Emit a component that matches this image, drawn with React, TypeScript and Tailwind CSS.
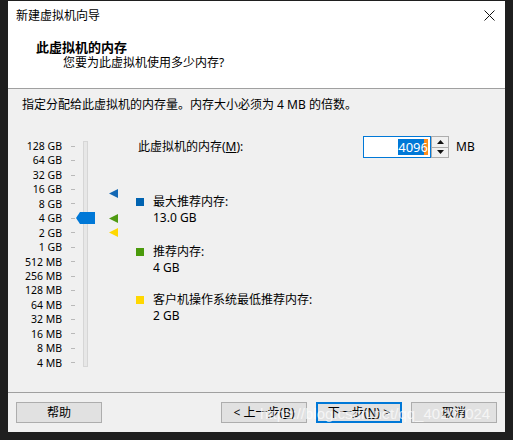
import React from "react";

const scale = [
  "128 GB", "64 GB", "32 GB", "16 GB", "8 GB", "4 GB", "2 GB", "1 GB",
  "512 MB", "256 MB", "128 MB", "64 MB", "32 MB", "16 MB", "8 MB", "4 MB",
];

function Marker({ color, top }: { color: string; top: number }) {
  return (
    <svg
      className="absolute left-[101px]"
      style={{ top }}
      width="10"
      height="9"
      viewBox="0 0 10 9"
    >
      <polygon points="0,4.5 9,0 9,9" fill={color} />
    </svg>
  );
}

function Legend({ color, label, value }: { color: string; label: string; value: string }) {
  return (
    <div className="flex flex-col">
      <div className="flex items-center h-[16px]">
        <span className={`w-[8px] h-[8px] ${color}`} />
        <span className="ml-[9px]">{label}</span>
      </div>
      <div className="h-[16px] leading-[16px] pl-[17px]">{value}</div>
    </div>
  );
}

function Btn({ children, primary }: { children: React.ReactNode; primary?: boolean }) {
  return (
    <button
      className={`w-[86px] h-[21px] flex items-center justify-center bg-[#e1e1e1] text-[12px] text-black ${
        primary ? "border-2 border-[#0078d7]" : "border border-[#adadad]"
      }`}
    >
      {children}
    </button>
  );
}

export default function App() {
  return (
    <div className="w-[513px] h-[440px] bg-[#1f1f1f] pt-[1px] pl-[8px] font-['Noto_Sans','Noto_Sans_CJK_SC',sans-serif] text-black">
      <div className="relative w-[497px] h-[431px] bg-[#f0f0f0] flex flex-col">
        {/* title + header */}
        <div className="h-[87px] bg-white flex flex-col">
          <div className="h-[29px] flex items-center justify-between pl-[8px] pr-[10px]">
            <span className="text-[12px]">新建虚拟机向导</span>
            <svg width="11" height="11" viewBox="0 0 11 11">
              <path d="M0.5 0.5 L10.5 10.5 M10.5 0.5 L0.5 10.5" stroke="#111" strokeWidth="1" />
            </svg>
          </div>
          <div className="pl-[28px] pt-[9px] text-[13px] font-bold leading-[16px]">此虚拟机的内存</div>
          <div className="pl-[55px] text-[12px] leading-[16px]">您要为此虚拟机使用多少内存?</div>
        </div>
        <div className="h-px bg-[#a0a0a0]" />

        {/* content */}
        <div className="h-[303px] flex flex-col text-[12px]">
          <div className="h-[32px] pl-[14px] flex items-center">
            指定分配给此虚拟机的内存量。内存大小必须为 4 MB 的倍数。
          </div>
          <div className="mt-[15px] flex">
            {/* slider */}
            <div className="relative w-[128px] mt-[3px] flex">
              <div className="w-[54px] flex flex-col items-end text-[10.5px]">
                {scale.map((s) => (
                  <div key={s} className="h-[14.45px] leading-[14.45px] whitespace-nowrap">
                    {s}
                  </div>
                ))}
              </div>
              <div className="ml-[9px] w-[4px] flex flex-col">
                {scale.map((s) => (
                  <div key={s} className="h-[14.45px] flex items-center">
                    <span className="w-[4px] h-px bg-[#b9b9b9]" />
                  </div>
                ))}
              </div>
              <div className="ml-[8px] mt-[2px] w-[5px] h-[226px] bg-[#e7e7e7] border border-[#d6d6d6]" />
              <svg className="absolute left-[68px] top-[73px]" width="20" height="12" viewBox="0 0 20 12">
                <polygon points="0,6 4,0 19,0 19,12 4,12" fill="#0078d7" />
              </svg>
              <Marker color="#1468b4" top={50} />
              <Marker color="#4f9a12" top={75} />
              <Marker color="#ffd800" top={89} />
            </div>

            {/* right side */}
            <div className="flex flex-col">
              <div className="flex items-center h-[22px]">
                <span className="ml-[2px] w-[225px]">
                  此虚拟机的内存(<span className="underline">M</span>):
                </span>
                <div className="w-[68px] h-[22px] bg-white border border-[#0078d7] flex items-center justify-end pr-[2px] text-[13px]">
                  <span className="bg-[#0078d7] text-white leading-[16px]">409</span>
                  <span className="leading-[16px] text-white bg-[linear-gradient(to_right,#0078d7_40%,#ff8c1a_40%)]">6</span>
                </div>
                <div className="w-[18px] h-[22px] flex flex-col border border-[#adadad] bg-[#adadad] gap-px">
                  <div className="flex-1 bg-[#f0f0f0] flex items-center justify-center">
                    <svg width="7" height="4" viewBox="0 0 7 4"><polygon points="0,4 3.5,0 7,4" fill="#111" /></svg>
                  </div>
                  <div className="flex-1 bg-[#f0f0f0] flex items-center justify-center">
                    <svg width="7" height="4" viewBox="0 0 7 4"><polygon points="0,0 7,0 3.5,4" fill="#111" /></svg>
                  </div>
                </div>
                <span className="ml-[7px]">MB</span>
              </div>
              <div className="mt-[36px]">
                <Legend color="bg-[#0063b1]" label="最大推荐内存:" value="13.0 GB" />
              </div>
              <div className="mt-[18px]">
                <Legend color="bg-[#4a9a0b]" label="推荐内存:" value="4 GB" />
              </div>
              <div className="mt-[16px]">
                <Legend color="bg-[#ffd700]" label="客户机操作系统最低推荐内存:" value="2 GB" />
              </div>
            </div>
          </div>
        </div>

        <div className="h-px bg-[#a0a0a0]" />
        {/* footer */}
        <div className="flex pt-[9px] pl-[8px] pr-[8px]">
          <Btn>帮助</Btn>
          <div className="flex-1" />
          <div className="flex gap-[9px]">
            <Btn>&lt; 上一步(<span className="underline">B</span>)</Btn>
            <Btn primary>下一步(<span className="underline">N</span>) &gt;</Btn>
            <Btn>取消</Btn>
          </div>
        </div>

        <div className="absolute left-[252px] top-[402px] text-[15px] font-['Liberation_Sans',sans-serif] text-white/70 pointer-events-none">
          https://blog.csdn.net/qq_40207024
        </div>
      </div>
    </div>
  );
}
